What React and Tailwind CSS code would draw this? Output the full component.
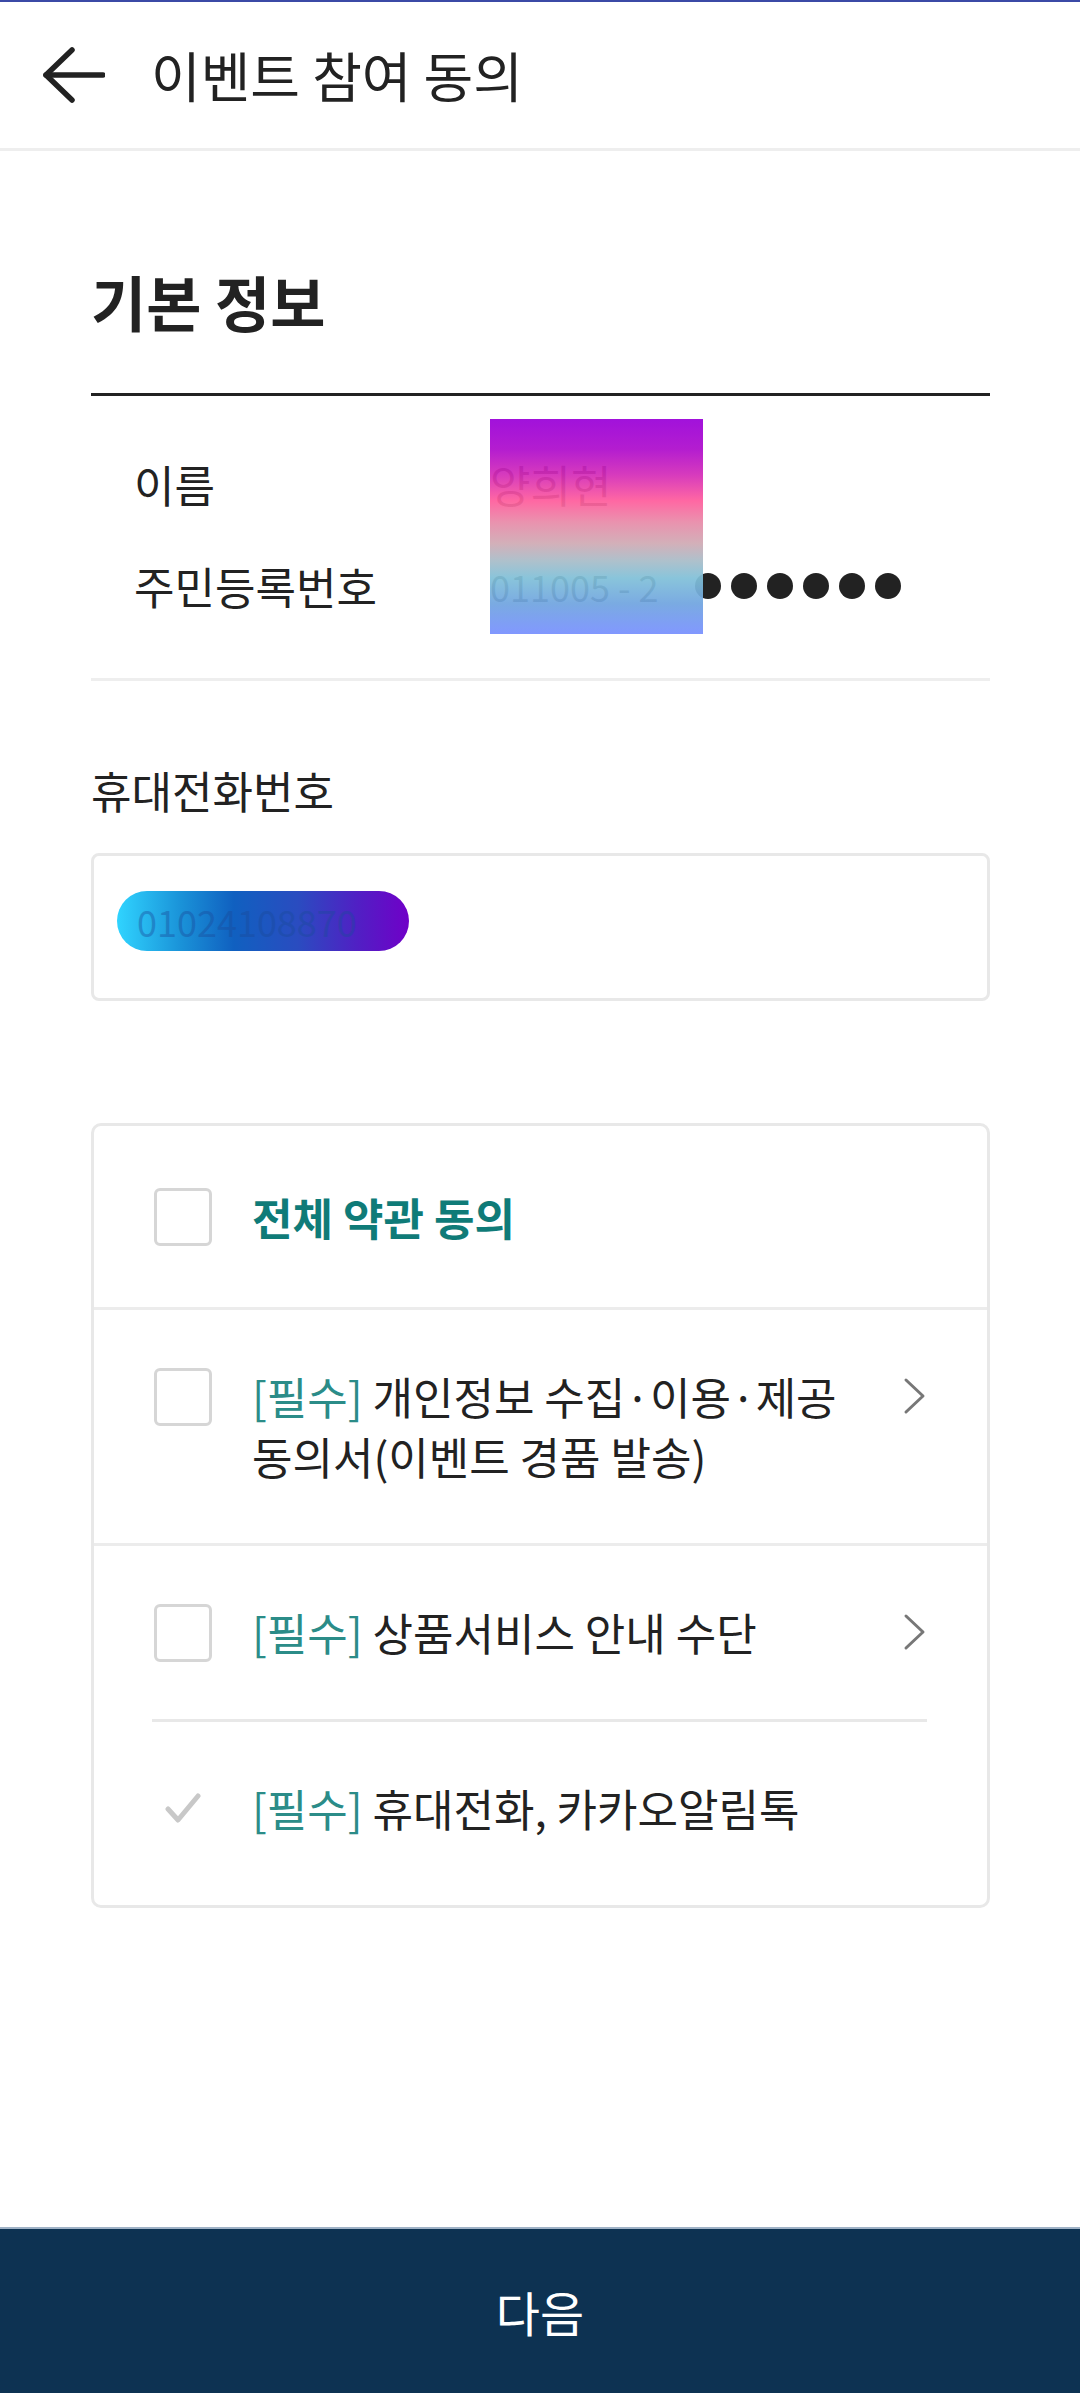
import React from 'react';

const terms = [
    { id: 'privacy', lines: '개인정보 수집·이용·제공 동의서(이벤트 경품 발송)', arrow: true },
    { id: 'service', lines: '상품서비스 안내 수단', arrow: true },
];

function BackArrow() {
    return (
        <svg width="62" height="56" viewBox="0 0 62 56" fill="none" stroke="#222222" strokeWidth="5.5" strokeLinecap="round" strokeLinejoin="round">
            <path d="M29 3 L3 28 L29 53" />
            <path d="M3 28 H60" />
        </svg>
    );
}

function Chevron() {
    return (
        <svg width="24" height="38" viewBox="0 0 24 38" fill="none" stroke="#777777" strokeWidth="3" strokeLinecap="round" strokeLinejoin="round">
            <path d="M3 3 L20 19 L3 35" />
        </svg>
    );
}

function Checkbox() {
    return (
        <div className="w-[58px] h-[58px] shrink-0 rounded-[6px] border-[3px] border-[#d6d6d6] bg-white" />
    );
}

function TermRow({ term }) {
    return (
        <div className="flex items-start pl-[60px] pr-[60px] pt-[56px] pb-[57px]">
            <div className="mt-[2px]">
                <Checkbox />
            </div>
            <p className="flex-1 ml-[40px] text-[44px] leading-[60px] text-[#222222] break-keep">
                <span className="text-[#2b8c88]">[필수]</span> {term.lines}
            </p>
            {term.arrow && (
                <div className="ml-[20px] mt-[11px]">
                    <Chevron />
                </div>
            )}
        </div>
    );
}

export default function App() {
    return (
        <div
            className="w-full h-[2393px] bg-white flex flex-col overflow-hidden"
            style={{ fontFamily: '"Noto Sans CJK KR", "Noto Sans", sans-serif' }}
        >
            <div className="h-[2px] bg-[#3b4aa6]" />
            <header className="h-[149px] flex items-center border-b-[3px] border-[#eeeeee]">
                <div className="ml-[43px]">
                    <BackArrow />
                </div>
                <h1 className="ml-[46px] text-[54px] leading-none text-[#222222]">이벤트 참여 동의</h1>
            </header>

            <main className="flex-1 pl-[91px] pr-[90px]">
                <h2 className="mt-[110px] text-[60px] leading-[80px] font-bold text-[#222222]">기본 정보</h2>

                <div className="relative mt-[52px] border-t-[3px] border-[#222222] pt-[58px] pb-[62px] pl-[43px] flex flex-col gap-[42px] text-[44px] leading-[60px] text-[#222222]">
                    <div className="flex items-center h-[60px]">
                        <span className="w-[356px] shrink-0">이름</span>
                        <span className="whitespace-nowrap">양희현</span>
                    </div>
                    <div className="flex items-center h-[60px]">
                        <span className="w-[356px] shrink-0">주민등록번호</span>
                        <span className="w-[205px] shrink-0 whitespace-nowrap text-[36px]">011005 - 2</span>
                        <div className="flex items-center gap-[10px]">
                            {[0, 1, 2, 3, 4, 5].map(i => (
                                <span key={i} className="w-[26px] h-[26px] rounded-full bg-[#222222]" />
                            ))}
                        </div>
                    </div>
                    <div className="absolute left-[399px] top-[23px] w-[213px] h-[215px] opacity-[0.93] bg-[linear-gradient(180deg,#9a00d8_0%,#ae0ccc_14%,#d42cb8_26%,#ff5c9c_38%,#e88aa8_48%,#cfaab4_58%,#a8bcc8_66%,#80c0d8_74%,#70a4e0_86%,#7890ff_100%)]" />
                </div>

                <div className="h-[3px] bg-[#eeeeee]" />

                <p className="mt-[79px] text-[44px] leading-[60px] text-[#222222]">휴대전화번호</p>

                <div className="mt-[33px] h-[148px] rounded-[8px] border-[3px] border-[#e8e8e8] pl-[23px] pt-[35px]">
                    <div className="w-[292px] h-[60px] rounded-full flex items-center pl-[20px] bg-[linear-gradient(90deg,#30d4ff_0%,#1a92d8_22%,#1060c0_40%,#2a4cc0_62%,#5020c4_82%,#7000c8_100%)]">
                        <span className="text-[36px] leading-none whitespace-nowrap text-[#1a4a9a] opacity-40">01024108870</span>
                    </div>
                </div>

                <div className="mt-[122px] rounded-[10px] border-[3px] border-[#e8e8e8]">
                    <div className="h-[181px] flex items-center pl-[60px]">
                        <Checkbox />
                        <span className="ml-[40px] text-[44px] leading-[60px] font-bold text-[#0f7b78]">전체 약관 동의</span>
                    </div>
                    <div className="h-[3px] bg-[#ececec]" />
                    <TermRow term={terms[0]} />
                    <div className="h-[3px] bg-[#ececec]" />
                    <TermRow term={terms[1]} />
                    <div className="h-[3px] ml-[58px] mr-[60px] bg-[#e8e8e8]" />
                    <div className="flex items-center pl-[71px] pt-[56px] pb-[67px]">
                        <svg width="36" height="32" viewBox="0 0 36 32" fill="none" stroke="#c8c8c8" strokeWidth="5" strokeLinecap="round" strokeLinejoin="round">
                            <path d="M3 17 L13 28 L33 4" />
                        </svg>
                        <p className="ml-[51px] text-[44px] leading-[60px] text-[#222222]">
                            <span className="text-[#2b8c88]">[필수]</span> 휴대전화, 카카오알림톡
                        </p>
                    </div>
                </div>
            </main>

            <button className="h-[166px] w-full shrink-0 border-t-[2px] border-[#9fb2c6] bg-[#0d3252] text-white text-[48px] leading-none">
                다음
            </button>
        </div>
    );
}
